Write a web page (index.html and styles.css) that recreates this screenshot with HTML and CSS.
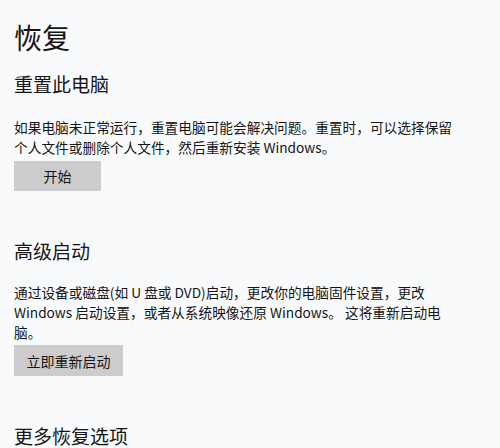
FILE: index.html
```html
<!DOCTYPE html>
<html lang="zh-CN">
<head>
<meta charset="utf-8">
<link rel="stylesheet" href="styles.css">
</head>
<body>
<main class="page">
  <h1 class="title">恢复</h1>
  <section class="group group-reset">
    <h2 class="heading">重置此电脑</h2>
    <p class="desc">如果电脑未正常运行，重置电脑可能会解决问题。重置时，可以选择保留个人文件或删除个人文件，然后重新安装 Windows。</p>
    <button class="btn btn-start">开始</button>
  </section>
  <section class="group group-adv">
    <h2 class="heading">高级启动</h2>
    <p class="desc">通过设备或磁盘(如 U 盘或 DVD)启动，更改你的电脑固件设置，更改 Windows 启动设置，或者从系统映像还原 Windows。 这将重新启动电脑。</p>
    <button class="btn btn-restart">立即重新启动</button>
  </section>
  <section class="group group-more">
    <h2 class="heading">更多恢复选项</h2>
  </section>
</main>
</body>
</html>
```

FILE: styles.css
```css
html, body {
  margin: 0;
  padding: 0;
  background: #f9fafc;
  height: 100%;
  overflow: hidden;
}
body {
  font-family: "Noto Sans CJK SC", "Noto Sans", sans-serif;
  color: #151515;
}
.page {
  padding: 20px 0 0 14px;
}
.title {
  margin: 0;
  font-size: 28px;
  line-height: 35px;
  font-weight: 400;
}
.heading {
  margin: 0;
  font-size: 19px;
  line-height: 26px;
  font-weight: 400;
}
.group-reset {
  margin-top: 16px;
}
.group-adv,
.group-more {
  margin-top: 47px;
}
.desc {
  margin: 0;
  max-width: 446px;
  font-size: 13.7px;
  line-height: 20px;
}
.group-reset .desc {
  margin-top: 20px;
}
.group-adv .desc {
  margin-top: 18px;
}
.btn {
  display: block;
  border: none;
  background: #cccccc;
  color: #151515;
  font-family: inherit;
  font-size: 14px;
  padding: 0;
  text-align: center;
}
.btn-start {
  margin-top: 4px;
  width: 87px;
  height: 30px;
}
.btn-restart {
  margin-top: 3px;
  width: 109px;
  height: 31px;
}
```
